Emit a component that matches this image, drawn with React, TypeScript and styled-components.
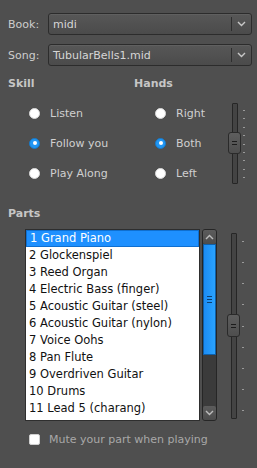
import { createGlobalStyle } from "styled-components";
import styled from "styled-components";

const Global = createGlobalStyle`
    html, body {
        margin: 0;
        padding: 0;
        background: #4f4f4f;
    }
    * { box-sizing: border-box; }
`;

const Panel = styled.div`
    width: 257px;
    height: 468px;
    background: #4f4f4f;
    padding: 13px 5px 0 8px;
    font-family: "DejaVu Sans", "Liberation Sans", sans-serif;
    font-size: 11px;
    color: #d2d2d2;
    display: flex;
    flex-direction: column;
`;

const FieldRow = styled.div`
    display: flex;
    align-items: center;
    height: 22px;
    margin-bottom: 9px;
`;

const FieldLabel = styled.div`
    width: 40px;
    color: #cdcdcd;
`;

const Combo = styled.div`
    flex: 1;
    height: 22px;
    display: flex;
    align-items: center;
    border: 1px solid #2c2c2c;
    border-radius: 3px;
    background: linear-gradient(#575757, #4b4b4b);
    box-shadow: inset 0 1px 0 rgba(255,255,255,0.06);
`;

const ComboText = styled.div`
    flex: 1;
    padding-left: 4px;
    color: #d6d6d6;
`;

const ComboDivider = styled.div`
    width: 1px;
    height: 14px;
    background: #2e2e2e;
`;

const ComboArrow = styled.div`
    width: 19px;
    display: flex;
    justify-content: center;
    align-items: center;
`;

const Heading = styled.div`
    font-weight: bold;
    color: #c6c6c6;
    height: 13px;
    line-height: 13px;
`;

const OptionsArea = styled.div`
    display: flex;
    margin-top: 2px;
`;

const OptionGroup = styled.div<{ $width: number }>`
    width: ${p => p.$width}px;
    display: flex;
    flex-direction: column;
`;

const RadioList = styled.div`
    display: flex;
    flex-direction: column;
    margin-top: 8px;
    padding-left: 21px;
`;

const RadioRow = styled.div`
    height: 30px;
    display: flex;
    align-items: center;
    gap: 10px;
    color: #d0d0d0;
`;

const RadioDot = styled.div<{ $on?: boolean }>`
    width: 11px;
    height: 11px;
    border-radius: 50%;
    background: ${p => (p.$on ? "#2196f3" : "#ffffff")};
    border: 1px solid ${p => (p.$on ? "#1679c9" : "#d8d8d8")};
    display: flex;
    align-items: center;
    justify-content: center;
    &::after {
        content: "";
        display: ${p => (p.$on ? "block" : "none")};
        width: 4px;
        height: 4px;
        border-radius: 50%;
        background: #ffffff;
    }
`;

const SliderBox = styled.div<{ $height: number; $top: number }>`
    position: relative;
    width: 20px;
    height: ${p => p.$height}px;
    margin-top: ${p => p.$top}px;
`;

const Groove = styled.div`
    position: absolute;
    left: 4px;
    top: 0;
    bottom: 0;
    width: 6px;
    border: 1px solid #262626;
    border-radius: 1px;
    background: #444444;
`;

const Handle = styled.div<{ $top: number; $h: number }>`
    position: absolute;
    left: 0;
    top: ${p => p.$top}px;
    width: 13px;
    height: ${p => p.$h}px;
    border: 1px solid #2a2a2a;
    border-radius: 3px;
    background: linear-gradient(#5e5e5e, #4e4e4e);
    display: flex;
    flex-direction: column;
    align-items: center;
    justify-content: center;
    gap: 2px;
`;

const Grip = styled.div<{ $color?: string }>`
    width: 5px;
    height: 1px;
    background: ${p => p.$color || "#1c1c1c"};
`;

const Ticks = styled.div<{ $top: number; $bottom: number }>`
    position: absolute;
    left: 15px;
    top: ${p => p.$top}px;
    bottom: ${p => p.$bottom}px;
    display: flex;
    flex-direction: column;
    justify-content: space-between;
`;

const Tick = styled.div`
    width: 2px;
    height: 1px;
    background: #9a9a9a;
`;

const PartsHeading = styled(Heading)`
    margin-top: 19px;
`;

const PartsArea = styled.div`
    display: flex;
    margin-top: 9px;
    padding-left: 17px;
`;

const ListBox = styled.div`
    width: 175px;
    height: 192px;
    background: #ffffff;
    border: 1px solid #2e2e2e;
    overflow: hidden;
`;

const ListRow = styled.div<{ $selected?: boolean }>`
    height: 17px;
    line-height: 17px;
    padding-left: 3px;
    white-space: nowrap;
    font-size: 11.5px;
    color: ${p => (p.$selected ? "#ffffff" : "#111111")};
    background: ${p => (p.$selected ? "#1e90ff" : "transparent")};
    border: ${p => (p.$selected ? "1px solid #0f6fd0" : "none")};
    line-height: ${p => (p.$selected ? "15px" : "17px")};
`;

const ScrollBar = styled.div`
    width: 15px;
    height: 192px;
    margin-left: 2px;
    display: flex;
    flex-direction: column;
    background: #3b3b3b;
    border: 1px solid #262626;
    border-radius: 3px;
`;

const ScrollButton = styled.div`
    height: 14px;
    display: flex;
    align-items: center;
    justify-content: center;
    background: linear-gradient(#5c5c5c, #4c4c4c);
    border-radius: 2px;
`;

const ScrollThumb = styled.div`
    height: 111px;
    background: linear-gradient(90deg, #1c8cf4, #29a3ff);
    border: 1px solid #0f5fa8;
    display: flex;
    flex-direction: column;
    align-items: center;
    justify-content: center;
    gap: 2px;
`;

const ScrollTrack = styled.div`
    flex: 1;
`;

const MuteRow = styled.div`
    display: flex;
    align-items: center;
    gap: 9px;
    margin-top: 12px;
    padding-left: 21px;
    color: #a8a8a8;
`;

const CheckBox = styled.div`
    width: 11px;
    height: 11px;
    border-radius: 2px;
    background: #ffffff;
    border: 1px solid #d0d0d0;
`;

function Chevron({ up, color = "#c8c8c8" }: { up?: boolean; color?: string }) {
    return (
        <svg width="9" height="6" viewBox="0 0 9 6">
            <path
                d={up ? "M1 5 L4.5 1.5 L8 5" : "M1 1 L4.5 4.5 L8 1"}
                fill="none"
                stroke={color}
                strokeWidth="1.4"
            />
        </svg>
    );
}

function Slider({ height, top, handleTop, handleH, tickTop, tickBottom }: {
    height: number; top: number; handleTop: number; handleH: number; tickTop: number; tickBottom: number;
}) {
    return (
        <SliderBox $height={height} $top={top}>
            <Groove />
            <Ticks $top={tickTop} $bottom={tickBottom}>
                {Array.from({ length: 9 }).map((_, i) => <Tick key={i} />)}
            </Ticks>
            <Handle $top={handleTop} $h={handleH}>
                <Grip />
                <Grip />
            </Handle>
        </SliderBox>
    );
}

const parts = [
    "1 Grand Piano",
    "2 Glockenspiel",
    "3 Reed Organ",
    "4 Electric Bass (finger)",
    "5 Acoustic Guitar (steel)",
    "6 Acoustic Guitar (nylon)",
    "7 Voice Oohs",
    "8 Pan Flute",
    "9 Overdriven Guitar",
    "10 Drums",
    "11 Lead 5 (charang)",
];

export default function App() {
    return (
        <Panel>
            <Global />
            <FieldRow>
                <FieldLabel>Book:</FieldLabel>
                <Combo>
                    <ComboText>midi</ComboText>
                    <ComboDivider />
                    <ComboArrow><Chevron /></ComboArrow>
                </Combo>
            </FieldRow>
            <FieldRow>
                <FieldLabel>Song:</FieldLabel>
                <Combo>
                    <ComboText>TubularBells1.mid</ComboText>
                    <ComboDivider />
                    <ComboArrow><Chevron /></ComboArrow>
                </Combo>
            </FieldRow>
            <OptionsArea>
                <OptionGroup $width={126}>
                    <Heading>Skill</Heading>
                    <RadioList>
                        <RadioRow><RadioDot />Listen</RadioRow>
                        <RadioRow><RadioDot $on />Follow you</RadioRow>
                        <RadioRow><RadioDot />Play Along</RadioRow>
                    </RadioList>
                </OptionGroup>
                <OptionGroup $width={94}>
                    <Heading>Hands</Heading>
                    <RadioList>
                        <RadioRow><RadioDot />Right</RadioRow>
                        <RadioRow><RadioDot $on />Both</RadioRow>
                        <RadioRow><RadioDot />Left</RadioRow>
                    </RadioList>
                </OptionGroup>
                <Slider height={81} top={26} handleTop={29} handleH={22} tickTop={7} tickBottom={6} />
            </OptionsArea>
            <PartsHeading>Parts</PartsHeading>
            <PartsArea>
                <ListBox>
                    {parts.map((p, i) => (
                        <ListRow key={p} $selected={i === 0}>{p}</ListRow>
                    ))}
                </ListBox>
                <ScrollBar>
                    <ScrollButton><Chevron up color="#bdbdbd" /></ScrollButton>
                    <ScrollThumb>
                        <Grip $color="#0d3f70" />
                        <Grip $color="#0d3f70" />
                        <Grip $color="#0d3f70" />
                    </ScrollThumb>
                    <ScrollTrack />
                    <ScrollButton><Chevron color="#bdbdbd" /></ScrollButton>
                </ScrollBar>
                <SliderWrap>
                    <Slider height={186} top={4} handleTop={81} handleH={23} tickTop={8} tickBottom={8} />
                </SliderWrap>
            </PartsArea>
            <MuteRow>
                <CheckBox />
                Mute your part when playing
            </MuteRow>
        </Panel>
    );
}

const SliderWrap = styled.div`
    margin-left: 10px;
`;
